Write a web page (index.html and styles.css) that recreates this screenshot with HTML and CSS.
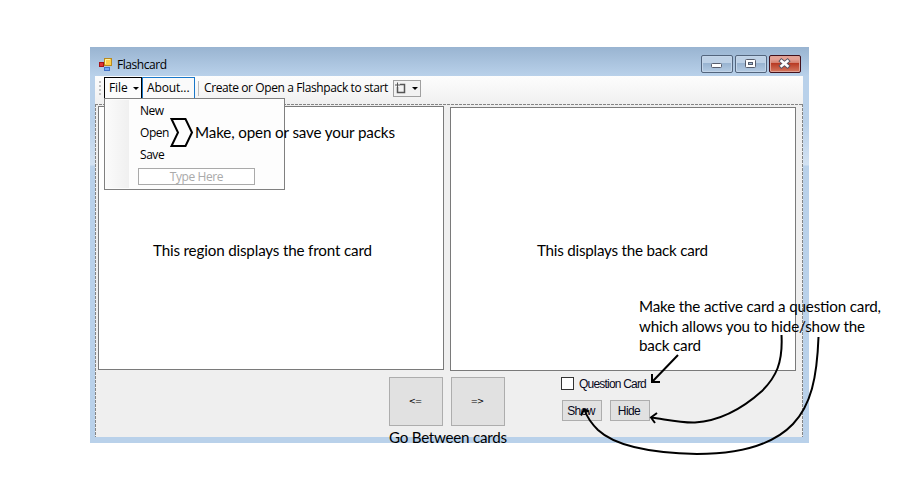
FILE: index.html
```html
<!DOCTYPE html>
<html lang="en">
<head>
<meta charset="utf-8">
<title>Flashcard</title>
<link rel="stylesheet" href="styles.css">
</head>
<body>
<main class="stage">
  <section class="window">
    <header class="titlebar">
      <svg class="app-icon" width="13" height="13" viewBox="0 0 13 13">
        <rect x="5.5" y=".5" width="7" height="7" fill="#fcd04b" stroke="#b98a20"/>
        <path d="M6.5 6V1.5H11" fill="none" stroke="#fff0a0"/>
        <rect x=".5" y="4.5" width="4" height="4" fill="#d33" stroke="#a31218"/>
        <rect x="5.5" y="9.5" width="5" height="3" fill="#74a8f3" stroke="#4272c8"/>
      </svg>
      <span class="title">Flashcard</span>
      <div class="controls">
        <span class="control"><svg width="32" height="18" viewBox="0 0 32 18"><rect x="10.5" y="8.5" width="10" height="4" rx="1" fill="#fff" stroke="#565c6c"/></svg></span>
        <span class="control"><svg width="32" height="18" viewBox="0 0 32 18"><rect x="10.5" y="4.500" width="10" height="8" rx="1" fill="#fff" stroke="#565c6c"/><rect x="13.500" y="7.500" width="4" height="2" fill="#9eb9d5" stroke="#565c6c"/></svg></span>
        <span class="control close"><svg width="32" height="18" viewBox="0 0 32 18"><path d="M12.500 6L18.500 11M18.500 6L12.500 11" stroke="#565564" stroke-width="4.400" stroke-linecap="square"/><path d="M12.500 6L18.500 11M18.500 6L12.500 11" stroke="#fff" stroke-width="2.500" stroke-linecap="square"/></svg></span>
      </div>
    </header>
    <div class="client">
      <nav class="toolbar">
        <span class="grip"></span>
        <div class="file-menu">
          <div class="menu-button file"><span>File</span><i class="caret"></i></div>
          <div class="dropdown">
            <div class="gutter"></div>
            <div class="items">
              <div class="item">New</div>
              <div class="item">Open</div>
              <div class="item">Save</div>
              <div class="type-here">Type Here</div>
            </div>
          </div>
        </div>
        <div class="menu-button about">About...</div>
        <span class="divider"></span>
        <span class="status">Create or Open a Flashpack to start</span>
        <span class="add-item">
          <svg width="16" height="15" viewBox="0 0 16 15"><path d="M6 3.500H10.500V11.500H3.500V6" fill="none" stroke="#555" stroke-width="1.500"/><path d="M1 4H6M3.500 1.500V6.500" stroke="#555"/></svg>
          <i class="caret"></i>
        </span>
      </nav>
      <div class="form">
        <div class="cards">
          <div class="card front"></div>
          <div class="card back"></div>
        </div>
        <div class="actions">
          <div class="nav-button">&lt;=</div>
          <div class="nav-button">=&gt;</div>
          <div class="question">
            <label class="check"><span class="box"></span><span>Question Card</span></label>
            <div class="pair"><div class="small-button">Show</div><div class="small-button">Hide</div></div>
          </div>
        </div>
        <svg class="selection" width="708" height="333" viewBox="0 0 708 333"><path d="M0 .5H708M.5 0V333M707.5 0V333" fill="none" stroke="#848484" stroke-dasharray="3 1"/></svg>
      </div>
    </div>
  </section>
  <svg class="notes" width="900" height="500" viewBox="0 0 900 500">
    <g class="note-text">
      <text x="195" y="138" textLength="200">Make, open or save your packs</text>
      <text x="153" y="256" textLength="219">This region displays the front card</text>
      <text x="537" y="256" textLength="171">This displays the back card</text>
      <text x="639" y="312" textLength="242">Make the active card a question card,</text>
      <text x="639" y="332" textLength="226">which allows you to hide/show the</text>
      <text x="639" y="351" textLength="62">back card</text>
      <text x="389" y="443" textLength="118">Go Between cards</text>
    </g>
    <g class="strokes">
      <path d="M171.500 119H185.500L192 132.500L185.500 146H171.500L178 132.500Z"/>
      <path d="M678 355L652 382M652 374V382H660"/>
      <path d="M781.500 335C783 363 776 377 762 391C742 409 718 421 695 422.500C680 423 664 419 651 417.500M657 413L651 417.500L655 423"/>
      <path d="M818.500 337C817 378 811 405 793 424C773 445 739 454 697 454C650 453 614 445 598 430C592 424 587 417 584.500 410M581 415.500L584 409.500L589 411.500"/>
    </g>
  </svg>
</main>
</body>
</html>
```
FILE: styles.css
```css
* { box-sizing: border-box; }
body { margin: 0; background: #fff; }
.stage {
  position: relative;
  width: 900px;
  height: 500px;
  padding: 47px 0 0 90px;
  overflow: hidden;
  font: 12px/16px "Open Sans", "Noto Sans", sans-serif;
  color: #000;
}
.window {
  width: 719px;
  height: 396px;
  padding: 0 6px 6px 5px;
  background: linear-gradient(#99b4d1 0, #b9d1ea 29px, #b9d1ea 76px, #d3e2f2 118px, #b9d1ea 119px);
}
.titlebar { display: flex; height: 29px; padding: 8px 2px 0 4px; }
.app-icon { margin-top: 3px; }
.title { margin: 2px auto 0 5px; letter-spacing: -.45px; }
.controls { display: flex; gap: 2px; }
.control {
  width: 32px;
  height: 18px;
  border: 1px solid #53657d;
  border-radius: 2px;
  box-shadow: inset 0 0 0 1px #c3d5e9;
  background: linear-gradient(#bed1e6 0 44%, #98b3d0 45%, #b4cbe3);
}
.control svg { display: block; margin: -1px; }
.close { border-color: #43111c; box-shadow: inset 0 0 0 1px #dfa296; background: linear-gradient(#e5a195 0 20%, #d37e6d 44%, #b83922 45%, #d47961); }
.client { width: 708px; height: 361px; background: #efefef; }
.toolbar {
  display: flex;
  height: 28px;
  padding: 1px 0 0 4px;
  background: linear-gradient(#fdfdfd, #f0f0f0);
}
.grip { width: 2px; height: 15px; margin: 4px 3px 0 0; background: repeating-linear-gradient(#c0c0c0 0 2px, transparent 2px 4px); }
.file-menu { position: relative; z-index: 1; width: 38px; }
.menu-button { display: flex; align-items: center; height: 22px; }
.file { height: 22px; padding-left: 4px; gap: 5px; border: 1px solid #000; border-bottom: 0; background: #fcfcfc; letter-spacing: -.1px; }
.file span { margin-top: -2px; }
.caret { width: 0; height: 0; border: 3px solid transparent; border-top-color: #000; border-bottom: 0; }
.about { width: 53px; padding: 0 0 1px 4px; border: 1px solid #1977c9; letter-spacing: -.1px; background: #fafafa; }
.divider { width: 1px; height: 15px; margin: 4px 5px 0 3px; background: #bdbdbd; }
.status { width: 185px; margin-top: 3px; white-space: nowrap; letter-spacing: -.39px; }
.add-item { display: flex; align-items: center; width: 28px; height: 17px; margin: 3px 0 0 4px; border: 1px solid #a0a0a0; background: #f2f2f2; gap: 2px; }
.dropdown {
  position: absolute;
  top: 21px;
  left: 0;
  display: flex;
  width: 181px;
  height: 92px;
  padding: 1px;
  border: 1px solid #808080;
  background: #fdfdfd;
}
.gutter { width: 23px; background: linear-gradient(90deg, #fbfbfb, #f0f0f0); }
.items { flex: 1; padding-left: 9px; }
.item { height: 22px; padding: 3px 0 0 2px; letter-spacing: -.45px; }
.type-here { width: 117px; height: 17px; margin-top: 2px; border: 1px solid #aaa; text-align: center; color: #aaa; line-height: 16px; letter-spacing: -.4px; background: #fff; }
.form { position: relative; height: 333px; padding: 2px 0 0 3px; }
.selection { position: absolute; top: 0; left: 0; }
.cards { display: flex; gap: 6px; height: 265px; }
.card { width: 346px; height: 264px; border: 1px solid #7a7a7a; background: #fff; }
.back { margin-top: 1px; }
.actions { display: flex; gap: 8px; padding: 6px 0 0 291px; font: 12px/14px "Liberation Sans", sans-serif; }
.nav-button { width: 54px; height: 49px; padding-right: 2px; border: 1px solid #adadad; background: #e1e1e1; text-align: center; line-height: 47px; font-family: "DejaVu Sans", sans-serif; font-size: 8.5px; letter-spacing: -.8px; }
.question { padding-left: 48px; color: #080820; letter-spacing: -.8px; }
.check { display: flex; gap: 5px; height: 23px; white-space: nowrap; }
.box { width: 13px; height: 13px; border: 1px solid #333; background: #fff; }
.pair { display: flex; gap: 8px; padding-left: 1px; }
.small-button { width: 40px; height: 21px; padding-right: 2px; border: 1px solid #adadad; background: #e1e1e1; text-align: center; line-height: 21px; letter-spacing: -.6px; }
.notes { position: absolute; z-index: 2; inset: 0; pointer-events: none; }
.note-text { font: 15.200px Lato, "Open Sans", sans-serif; fill: #000; }
.strokes { fill: none; stroke: #000; stroke-width: 2; }
```
